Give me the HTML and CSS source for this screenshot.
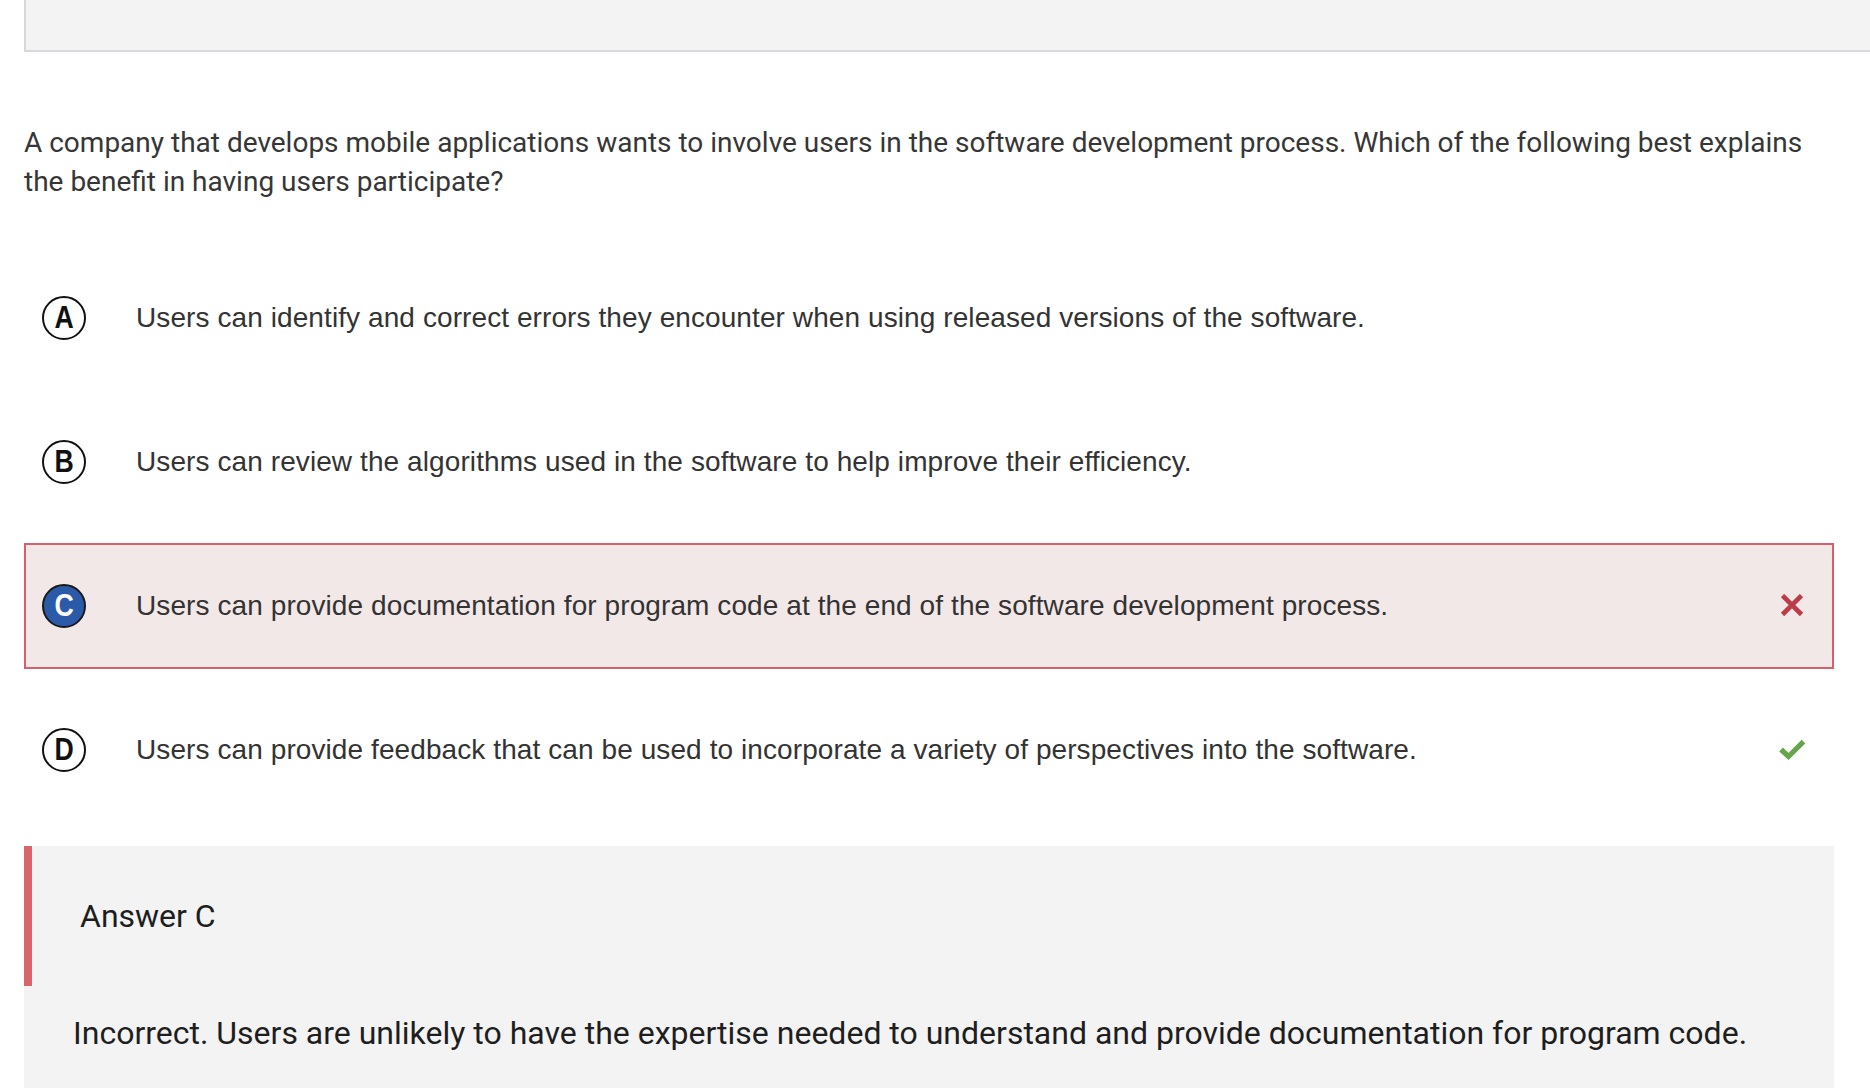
FILE: index.html
```html
<!DOCTYPE html>
<html lang="en">
<head>
<meta charset="utf-8">
<title>Question</title>
<link rel="stylesheet" href="styles.css">
</head>
<body>
<div class="page">
  <div class="top-box"></div>
  <p class="question">A company that develops mobile applications wants to involve users in the software development process. Which of the following best explains the benefit in having users participate?</p>
  <div class="options">
    <div class="option">
      <span class="badge"><span class="letter">A</span></span>
      <span class="opt-text">Users can identify and correct errors they encounter when using released versions of the software.</span>
    </div>
    <div class="option">
      <span class="badge"><span class="letter">B</span></span>
      <span class="opt-text">Users can review the algorithms used in the software to help improve their efficiency.</span>
    </div>
    <div class="option wrong">
      <span class="badge selected"><span class="letter">C</span></span>
      <span class="opt-text">Users can provide documentation for program code at the end of the software development process.</span>
      <span class="mark">
        <svg width="26" height="24" viewBox="0 0 26 24"><path d="M3.5 1.5 L22.5 20.5 M22.5 1.5 L3.5 20.5" stroke="#be3c4a" stroke-width="4.6" fill="none"/></svg>
      </span>
    </div>
    <div class="option">
      <span class="badge"><span class="letter">D</span></span>
      <span class="opt-text">Users can provide feedback that can be used to incorporate a variety of perspectives into the software.</span>
      <span class="mark">
        <svg width="26" height="24" viewBox="0 0 26 24"><path d="M2 11.5 L9.5 18.5 L24.5 3.5" stroke="#67a54c" stroke-width="5.2" fill="none"/></svg>
      </span>
    </div>
  </div>
  <div class="answer">
    <div class="answer-head">Answer C</div>
    <p class="explanation">Incorrect. Users are unlikely to have the expertise needed to understand and provide documentation for program code.</p>
  </div>
</div>
</body>
</html>
```

FILE: styles.css
```css
html, body {
  margin: 0;
  padding: 0;
  background: #ffffff;
}

.page {
  padding: 0 36px 0 24px;
  font-family: Roboto, "Liberation Sans", sans-serif;
}

.top-box {
  height: 50px;
  margin-right: -36px;
  background: #f3f3f3;
  border-left: 2px solid #d8d7dc;
  border-bottom: 2px solid #d8d7dc;
}

.question {
  margin: 71px 0 0 0;
  font-size: 28px;
  line-height: 39px;
  color: #363636;
}

.options {
  margin-top: 54px;
  display: flex;
  flex-direction: column;
  gap: 18px;
}

.option {
  height: 122px;
  display: flex;
  align-items: center;
  border: 2px solid transparent;
  padding: 0 27px 0 16px;
  font-family: "Liberation Sans", Arial, sans-serif;
  font-size: 28px;
  letter-spacing: 0.09px;
  color: #333333;
}

.option.wrong {
  background: #f3e8e8;
  border-color: #d6606b;
}

.badge {
  width: 40px;
  height: 40px;
  flex: none;
  border: 2px solid #111111;
  border-radius: 50%;
  display: flex;
  align-items: center;
  justify-content: center;
  font-family: "Liberation Sans", Arial, sans-serif;
  font-weight: bold;
  font-size: 31px;
  letter-spacing: 0;
  color: #111111;
  background: #ffffff;
}

.letter {
  display: inline-block;
  transform: scaleX(0.86);
}

.badge.selected {
  background: #2b5aa8;
  color: #ffffff;
  border-color: #1a1a1a;
}

.opt-text {
  margin-left: 50px;
}

.mark {
  margin-left: auto;
  width: 26px;
  height: 24px;
  display: flex;
}

.answer {
  margin-top: 33px;
  background: #f3f3f3;
  padding-bottom: 40px;
}

.answer-head {
  height: 140px;
  border-left: 8px solid #d9646e;
  padding-left: 48px;
  display: flex;
  align-items: center;
  font-size: 32px;
  color: #1e1e1e;
}

.explanation {
  margin: 28px 0 0 0;
  padding-left: 49px;
  font-size: 32px;
  line-height: 38px;
  color: #1e1e1e;
}
```
